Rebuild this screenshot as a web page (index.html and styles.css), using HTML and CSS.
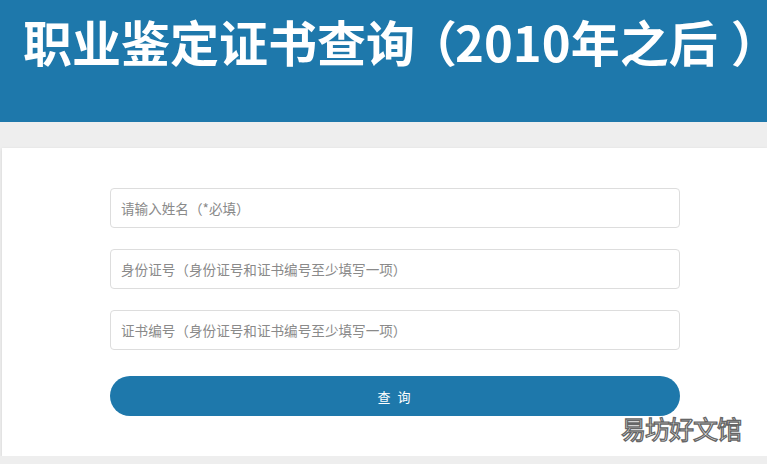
FILE: index.html
```html
<!DOCTYPE html>
<html lang="zh">
<head>
<meta charset="utf-8">
<link rel="stylesheet" href="styles.css">
</head>
<body>
<header class="header">
  <h1 class="title">职业鉴定证书查询<span class="paren-open">（</span>2010年之后<span class="paren-close">）</span></h1>
</header>
<div class="band"></div>
<main class="card">
  <form class="form">
    <input class="field" type="text" placeholder="请输入姓名（*必填）">
    <input class="field" type="text" placeholder="身份证号（身份证号和证书编号至少填写一项）">
    <input class="field" type="text" placeholder="证书编号（身份证号和证书编号至少填写一项）">
    <button class="btn" type="button">查 询</button>
  </form>
  <div class="watermark">易坊好文馆</div>
</main>
</body>
</html>
```
FILE: styles.css
```css
html, body {
  margin: 0;
  padding: 0;
  background: #eeeeee;
  font-family: "Noto Sans CJK SC", "Noto Sans", sans-serif;
  overflow: hidden;
}
.header {
  background: #1e78ab;
  height: 122px;
  box-sizing: border-box;
  padding-top: 7px;
}
.title {
  margin: 0;
  padding-left: 23px;
  color: #fff;
  font-size: 49px;
  font-weight: 700;
  line-height: 68px;
  letter-spacing: 0;
  white-space: nowrap;
}
.paren-open {
  margin-left: -7px;
  margin-right: -2px;
}
.paren-close {
  margin-left: 13px;
  margin-right: -20px;
}
.band {
  height: 26px;
}
.card {
  position: relative;
  margin-left: 2px;
  background: #fff;
  height: 308px;
  box-shadow: 0 1px 3px rgba(0,0,0,0.12);
  box-sizing: border-box;
  padding: 40px 0 0 108px;
}
.form {
  width: 570px;
  display: flex;
  flex-direction: column;
  gap: 21px;
}
.field {
  height: 40px;
  box-sizing: border-box;
  border: 1px solid #dddddd;
  border-radius: 4px;
  padding: 0 10px;
  font-family: inherit;
  font-size: 13.6px;
  color: #555;
  outline: none;
}
.field::placeholder {
  color: #8a8a8a;
}
.btn {
  margin-top: 5px;
  height: 40px;
  border: none;
  border-radius: 20px;
  background: #1e78ab;
  color: #fff;
  font-family: inherit;
  font-size: 13px;
  letter-spacing: 2px;
}
.watermark {
  position: absolute;
  left: 619px;
  top: 265px;
  font-size: 25px;
  line-height: 30px;
  color: #fff;
  -webkit-text-stroke: 1.3px #666;
  letter-spacing: -1px;
}
```
